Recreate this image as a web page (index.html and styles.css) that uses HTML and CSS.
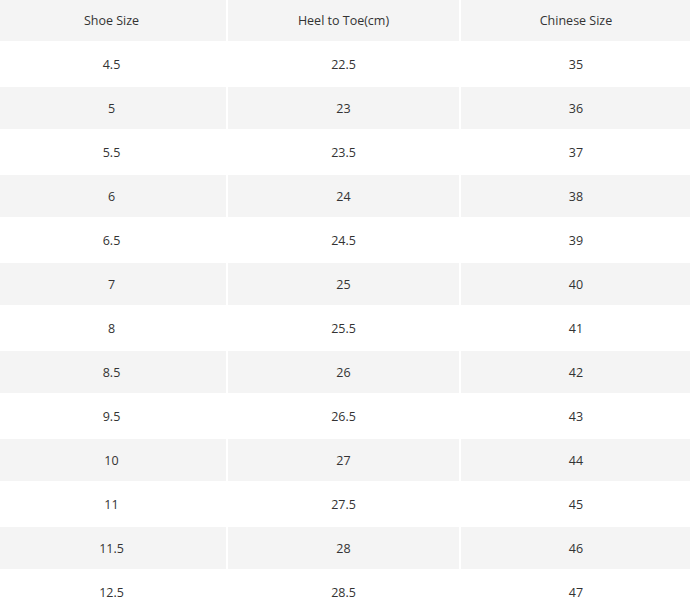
FILE: index.html
```html
<!DOCTYPE html>
<html>
<head>
<meta charset="utf-8">
<link rel="stylesheet" href="styles.css">
</head>
<body>
<table class="size-table">
  <colgroup>
    <col class="c1"><col class="c2"><col class="c3">
  </colgroup>
  <thead>
    <tr class="head"><th>Shoe Size</th><th>Heel to Toe(cm)</th><th>Chinese Size</th></tr>
  </thead>
  <tbody>
    <tr><td>4.5</td><td>22.5</td><td>35</td></tr>
    <tr><td>5</td><td>23</td><td>36</td></tr>
    <tr><td>5.5</td><td>23.5</td><td>37</td></tr>
    <tr><td>6</td><td>24</td><td>38</td></tr>
    <tr><td>6.5</td><td>24.5</td><td>39</td></tr>
    <tr><td>7</td><td>25</td><td>40</td></tr>
    <tr><td>8</td><td>25.5</td><td>41</td></tr>
    <tr><td>8.5</td><td>26</td><td>42</td></tr>
    <tr><td>9.5</td><td>26.5</td><td>43</td></tr>
    <tr><td>10</td><td>27</td><td>44</td></tr>
    <tr><td>11</td><td>27.5</td><td>45</td></tr>
    <tr><td>11.5</td><td>28</td><td>46</td></tr>
    <tr><td>12.5</td><td>28.5</td><td>47</td></tr>
  </tbody>
</table>
</body>
</html>
```
FILE: styles.css
```css
html, body {
  margin: 0;
  padding: 0;
  background: #ffffff;
  overflow: hidden;
}
.size-table {
  width: 696px;
  margin-left: -4px;
  table-layout: fixed;
  border-collapse: separate;
  border-spacing: 0;
  font-family: "Open Sans", "Noto Sans", sans-serif;
  font-size: 12.5px;
  color: #333333;
}
.c1 { width: 231px; }
.c2 { width: 233px; }
.c3 { width: 232px; }
.size-table th,
.size-table td {
  border: 1px solid #ffffff;
  padding: 0;
  text-align: center;
  font-weight: normal;
  box-sizing: border-box;
  height: 44px;
}
.size-table th {
  height: 42px;
  border-top: 0;
  background: #f4f4f4;
}
.size-table tbody tr:nth-child(even) td {
  background: #f4f4f4;
}
```
